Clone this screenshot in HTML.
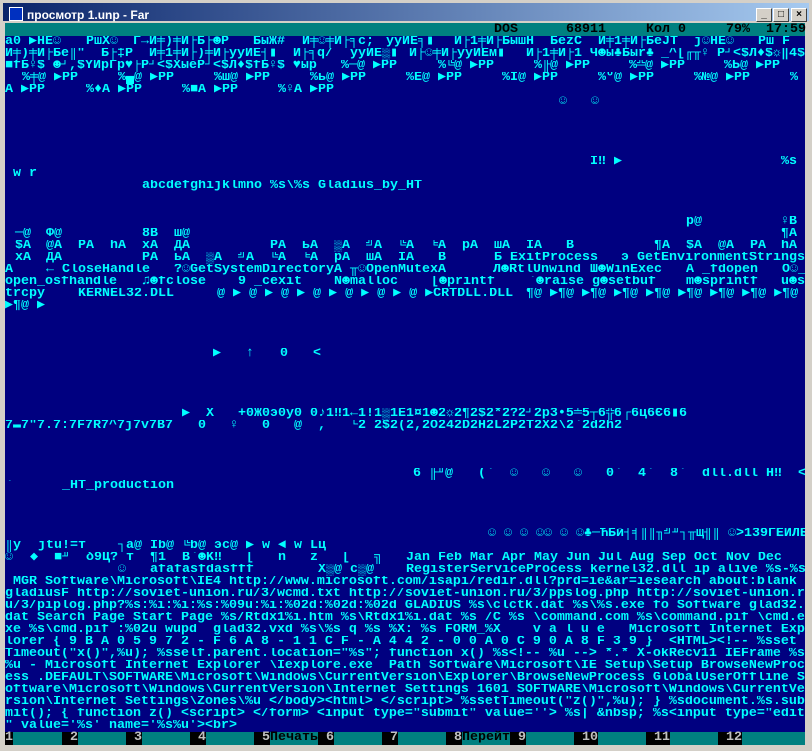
<!DOCTYPE html>
<html><head><meta charset="utf-8">
<style>
*{margin:0;padding:0;box-sizing:border-box}
body{width:812px;height:751px;background:#d4d0c8;position:relative;overflow:hidden;font-family:"Liberation Mono","DejaVu Sans Mono",monospace}
#tb{position:absolute;left:3px;top:3px;width:806px;height:18px;background:linear-gradient(90deg,#0a246a,#a6caf0)}
#tt{position:absolute;left:24px;top:5px;color:#fff;font:bold 12px "Liberation Sans",sans-serif}
.ic{position:absolute;left:6px;top:4px;width:14px;height:14px;background:#0030c0;border:1px solid #fff}
.btn{position:absolute;top:5px;width:16px;height:14px;background:#d4d0c8;border:1px solid;border-color:#fff #404040 #404040 #fff;font:bold 10px "Liberation Sans",sans-serif;text-align:center;line-height:12px;color:#000}
#st{position:absolute;left:5px;top:23px;width:800px;height:13px;background:#008080}
#ct{position:absolute;left:5px;top:36px;width:800px;height:696px;background:#000080;overflow:hidden}
.r{position:absolute;left:0;height:12px;width:800px;white-space:pre;overflow:hidden}
.r i,#st i{position:absolute;top:0;font-style:normal}
#ct,#kb{font-size:13.33px;line-height:12px;font-weight:bold;color:#00ffff}
#st{font-size:13.33px;line-height:13px;font-weight:bold;color:#000}
#kb{position:absolute;left:5px;top:732px;width:800px;height:13px;background:#008080;color:#000}
#kb b{position:absolute;top:0;background:#000;color:#c0c0c0;height:13px;text-align:right}
#kb i{position:absolute;top:0;font-style:normal}
</style></head><body>
<div id="tb"><div class="ic"></div><div id="tt">просмотр 1.unp - Far</div>
<div class="btn" style="left:753px">_</div><div class="btn" style="left:770px">□</div><div class="btn" style="left:788px">×</div></div>
<div id="st"><i style="left:489px">DOS</i><i style="left:561px">68911</i><i style="left:641px">Кол 0</i><i style="left:721px">79%</i><i style="left:761px">17:59</i></div>
<div id="ct">
<div class="r" style="top:0"><i style="left:0">a0 ▶HE☺</i><i style="left:81px">РшХ☺</i><i style="left:128px">Г→Й╪)╪Й├Б├☻Р</i><i style="left:248px">БыЖ#</i><i style="left:297px">Й╪☺╪Й├╕с;</i><i style="left:381px">ÿуИЕ╕▮</i><i style="left:449px">Й├1╪Й├БышН</i><i style="left:545px">БеzС</i><i style="left:593px">Й╪1╪Й├БеJТ</i><i style="left:689px">j☺НЕ☺</i><i style="left:753px">Рш F</i></div>
<div class="r" style="top:12px"><i style="left:0">Й╪)╪Й├Бе║"</i><i style="left:96px">Б├‡Р</i><i style="left:144px">Й╪1╪Й├)╪Й├ÿуИЕ┤▮</i><i style="left:288px">Й├╕q/</i><i style="left:345px">ÿуИЕ▒▮</i><i style="left:404px">Й├☺╪Й├ÿуИЕм▮</i><i style="left:521px">Й├1╪Й├1 Ч☻ы♣Быr♣</i><i style="left:656px">_^[╓╥♀ Р┘<$Л♦$☼‖4$</i></div>
<div class="r" style="top:24px"><i style="left:0">■fБ♀$ ☻┘,$YИрГр♥├Р┘<$ХыеР┘<$Л♦$fБ♀$ ♥ыр</i><i style="left:336px">%─@ ▶РР</i><i style="left:433px">%╚@ ▶РР</i><i style="left:529px">%╟@ ▶РР</i><i style="left:624px">%╩@ ▶РР</i><i style="left:719px">%Ь@ ▶РР</i></div>
<div class="r" style="top:36px"><i style="left:17px">%╪@ ▶РР</i><i style="left:113px">%▄@ ▶РР</i><i style="left:209px">%ш@ ▶РР</i><i style="left:305px">%ь@ ▶РР</i><i style="left:401px">%Е@ ▶РР</i><i style="left:497px">%Ї@ ▶РР</i><i style="left:593px">%º@ ▶РР</i><i style="left:689px">%№@ ▶РР</i><i style="left:785px">%</i></div>
<div class="r" style="top:48px"><i style="left:0">A ▶РР</i><i style="left:81px">%♦A ▶РР</i><i style="left:177px">%■A ▶РР</i><i style="left:273px">%♀A ▶РР</i></div>
<div class="r" style="top:60px"><i style="left:554px">☺</i><i style="left:586px">☺</i></div>
<div class="r" style="top:120px"><i style="left:585px">I‼ ▶</i><i style="left:776px">%s</i></div>
<div class="r" style="top:132px"><i style="left:8px">w r</i></div>
<div class="r" style="top:144px"><i style="left:137px">abcdefghijklmno %s\%s Gladius_by_HT</i></div>
<div class="r" style="top:180px"><i style="left:681px">р@</i><i style="left:776px">♀B</i></div>
<div class="r" style="top:192px"><i style="left:10px">─@</i><i style="left:41px">Ф@</i><i style="left:137px">8B</i><i style="left:169px">ш@</i><i style="left:776px">¶A</i></div>
<div class="r" style="top:204px"><i style="left:10px">$A</i><i style="left:41px">@A</i><i style="left:73px">РA</i><i style="left:105px">hA</i><i style="left:137px">xA</i><i style="left:169px">ДA</i><i style="left:265px">РA</i><i style="left:297px">ьA</i><i style="left:329px">▒A</i><i style="left:361px">╝A</i><i style="left:393px">╚A</i><i style="left:425px">╘A</i><i style="left:457px">рA</i><i style="left:489px">шA</i><i style="left:521px">ЇA</i><i style="left:561px">B</i><i style="left:649px">¶A</i><i style="left:681px">$A</i><i style="left:713px">@A</i><i style="left:745px">РA</i><i style="left:776px">hA</i></div>
<div class="r" style="top:216px"><i style="left:10px">xA</i><i style="left:41px">ДA</i><i style="left:137px">РA</i><i style="left:169px">ьA</i><i style="left:201px">▒A</i><i style="left:233px">╝A</i><i style="left:265px">╚A</i><i style="left:297px">╘A</i><i style="left:329px">рA</i><i style="left:361px">шA</i><i style="left:393px">ЇA</i><i style="left:433px">B</i><i style="left:489px">Б ExitProcess</i><i style="left:616px">э GetEnvironmentStrings</i></div>
<div class="r" style="top:228px"><i style="left:0">A</i><i style="left:41px">← CloseHandle</i><i style="left:169px">?☺GetSystemDirectoryA</i><i style="left:345px">╥☺OpenMutexA</i><i style="left:488px">Л☻RtlUnwind</i><i style="left:585px">Ш☻WinExec</i><i style="left:681px">A _fdopen</i><i style="left:777px">O☺_</i></div>
<div class="r" style="top:240px"><i style="left:0">open_osfhandle</i><i style="left:137px">♫☻fclose</i><i style="left:233px">9 _cexit</i><i style="left:329px">N☻malloc</i><i style="left:426px">[☻printf</i><i style="left:523px">`☻raise g☻setbuf</i><i style="left:681px">m☻sprintf</i><i style="left:776px">u☻s</i></div>
<div class="r" style="top:252px"><i style="left:0">trcpy</i><i style="left:73px">KERNEL32.DLL</i><i style="left:212px">@ ▶ @ ▶ @ ▶ @ ▶ @ ▶ @ ▶ @ ▶CRTDLL.DLL</i><i style="left:521px">¶@ ▶¶@ ▶¶@ ▶¶@ ▶¶@ ▶¶@ ▶¶@ ▶¶@ ▶¶@</i></div>
<div class="r" style="top:264px"><i style="left:0">▶¶@ ▶</i></div>
<div class="r" style="top:312px"><i style="left:208px">▶</i><i style="left:241px">↑</i><i style="left:275px">0</i><i style="left:308px">&lt;</i></div>
<div class="r" style="top:372px"><i style="left:177px">▶</i><i style="left:201px">X</i><i style="left:233px">+0Ж0э0ÿ0 0♪1‼1←1!1▒1Ё1¤1☻2☼2¶2$2*2?2┘2р3•5╧5┬6╬6</i><i style="left:618px">┌6ц6Є6▮6</i></div>
<div class="r" style="top:384px"><i style="left:0">7▬7"7.7:7F7R7^7j7v7B7</i><i style="left:193px">0</i><i style="left:225px">♀</i><i style="left:257px">0</i><i style="left:289px">@</i><i style="left:313px">,</i><i style="left:345px">└2 2$2(2,2О242D2H2L2P2T2X2\2`2d2h2</i></div>
<div class="r" style="top:432px"><i style="left:408px">6 ╟╜@</i><i style="left:473px">(`</i><i style="left:505px">☺</i><i style="left:537px">☺</i><i style="left:569px">☺</i><i style="left:601px">0`</i><i style="left:633px">4`</i><i style="left:665px">8`</i><i style="left:697px">dll.dll H‼</i><i style="left:793px">&lt;</i></div>
<div class="r" style="top:444px"><i style="left:0">`</i><i style="left:57px">_HT_production</i></div>
<div class="r" style="top:492px"><i style="left:483px">☺ ☺ ☺ ☺☺ ☺ ☺♣─ЋБй┤╡║║╖╝╜┐╥щ╢║ ☺>139ГЕЙЛБН</i></div>
<div class="r" style="top:504px"><i style="left:0">║ÿ</i><i style="left:33px">jtu!=т</i><i style="left:113px">┐a@ Ib@ ╚b@ эс@ ▶ w ◄ w Lц</i></div>
<div class="r" style="top:516px"><i style="left:0">☺</i><i style="left:25px">◆</i><i style="left:49px">■╜</i><i style="left:81px">δ9Ц?</i><i style="left:121px">т</i><i style="left:145px">¶1</i><i style="left:177px">B`☻K‼</i><i style="left:241px">[</i><i style="left:273px">n</i><i style="left:305px">z</i><i style="left:337px">[</i><i style="left:369px">╗</i><i style="left:401px">Jan Feb Mar Apr May Jun Jul Aug Sep Oct Nov Dec</i></div>
<div class="r" style="top:528px"><i style="left:113px">☺</i><i style="left:145px">afafasfdasfff</i><i style="left:313px">X▒@ c▒@</i><i style="left:401px">RegisterServiceProcess kernel32.dll ip alive %s-%s</i></div>
<div class="r" style="top:540px"> MGR Software\Microsoft\IE4 http://www.microsoft.com/isapi/redir.dll?prd=ie&amp;ar=iesearch about:blank</div>
<div class="r" style="top:552px">gladiusF http://soviet-union.ru/3/wcmd.txt http://soviet-union.ru/3/ppslog.php http://soviet-union.r</div>
<div class="r" style="top:564px">u/3/piplog.php?%s:%i:%i:%s:%09u:%i:%02d:%02d:%02d GLADIUS %s\clctk.dat %s\%s.exe fo Software glad32.</div>
<div class="r" style="top:576px">dat Search Page Start Page %s/Rtdx1%i.htm %s\Rtdx1%i.dat %s /C %s \command.com %s\command.pif \cmd.e</div>
<div class="r" style="top:588px">xe %s\cmd.pif :%02u wupd  glad32.vxd %s\%s q %s %X: %s FORM_%X    v a l u e   Microsoft Internet Exp</div>
<div class="r" style="top:600px">lorer { 9 B A 0 5 9 7 2 - F 6 A 8 - 1 1 C F - A 4 4 2 - 0 0 A 0 C 9 0 A 8 F 3 9 }  &lt;HTML>&lt;!-- %sset</div>
<div class="r" style="top:612px">Timeout("x()",%u); %sself.parent.location="%s"; function x() %s&lt;!-- %u --> *.* X-okRecv11 IEFrame %s</div>
<div class="r" style="top:624px">%u - Microsoft Internet Explorer \Iexplore.exe  Path Software\Microsoft\IE Setup\Setup BrowseNewProc</div>
<div class="r" style="top:636px">ess .DEFAULT\SOFTWARE\Microsoft\Windows\CurrentVersion\Explorer\BrowseNewProcess GlobalUserOffline S</div>
<div class="r" style="top:648px">oftware\Microsoft\Windows\CurrentVersion\Internet Settings 1601 SOFTWARE\Microsoft\Windows\CurrentVe</div>
<div class="r" style="top:660px">rsion\Internet Settings\Zones\%u &lt;/body>&lt;html> &lt;/script> %ssetTimeout("z()",%u); } %sdocument.%s.sub</div>
<div class="r" style="top:672px">mit(); { function z() &lt;script> &lt;/form> &lt;input type="submit" value=''> %s| &amp;nbsp; %s&lt;input type="edit</div>
<div class="r" style="top:684px">" value='%s' name='%s%u'>&lt;br></div>
</div>
<div id="kb">
<b style="left:0;width:8px">1</b>
<b style="left:57px;width:16px">2</b>
<b style="left:121px;width:16px">3</b>
<b style="left:185px;width:16px">4</b>
<b style="left:249px;width:16px">5</b><i style="left:265px">Печать</i>
<b style="left:313px;width:16px">6</b>
<b style="left:377px;width:16px">7</b>
<b style="left:441px;width:16px">8</b><i style="left:457px">Перейт</i>
<b style="left:505px;width:16px">9</b>
<b style="left:569px;width:24px">10</b>
<b style="left:641px;width:24px">11</b>
<b style="left:713px;width:24px">12</b>
</div>
</body></html>
